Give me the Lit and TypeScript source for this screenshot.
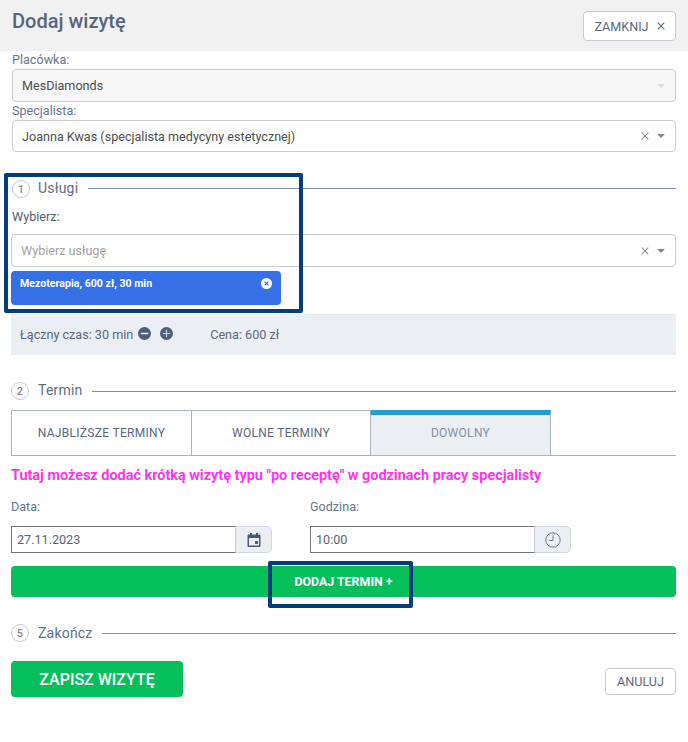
import { LitElement, html, css } from 'lit';
import { customElement } from 'lit/decorators.js';

const caret = html`<span class="caret"></span>`;
const cross = html`<svg class="cross" width="8" height="8" viewBox="0 0 8 8"><path d="M.7.7l6.6 6.6M7.3.7L.7 7.3" stroke="currentColor" stroke-width="1.1" fill="none"/></svg>`;

@customElement('app-root')
export class AppRoot extends LitElement {
    static styles = css`
        :host {
            display: block;
            position: relative;
            height: 742px;
            overflow: hidden;
            background: #fff;
            font-family: Roboto, "Liberation Sans", sans-serif;
            font-size: 12.6px;
            color: #5a6780;
        }

        .header {
            height: 51px;
            box-sizing: border-box;
            background: #f1f1f1;
            display: flex;
            justify-content: space-between;
            padding: 11px 12px 0;
        }

        h1 {
            margin: 0;
            font-size: 20px;
            line-height: 20px;
            font-weight: 500;
            color: #56657f;
        }

        .ghost {
            box-sizing: border-box;
            display: flex;
            align-items: center;
            justify-content: center;
            background: #fff;
            border: 1px solid #c5cbd8;
            border-radius: 4px;
            color: #5a6780;
        }

        .close {
            width: 93px;
            height: 30px;
            gap: 8px;
        }

        .content {
            padding: 0 12px 0 11px;
        }

        .field-label {
            height: 18px;
            line-height: 18px;
            padding-left: 1px;
            color: #66758f;
        }

        .select {
            box-sizing: border-box;
            display: flex;
            align-items: center;
            border: 1px solid #cccccc;
            border-radius: 4px;
            background: #fff;
            padding: 0 10px 0 9px;
            color: #4d4d4d;
        }

        .select .value {
            flex: 1;
        }

        .select .cross {
            color: #8c8c8c;
            margin-right: 8px;
        }

        .caret {
            width: 0;
            height: 0;
            border-left: 4px solid transparent;
            border-right: 4px solid transparent;
            border-top: 4px solid #888;
        }

        .placowka {
            height: 33px;
            margin-left: 1px;
            background: #f7f7f7;
        }

        .placowka .caret {
            border-top-color: #ddd;
        }

        .specjalista {
            height: 32px;
            margin-left: 1px;
        }

        .section {
            display: flex;
            align-items: center;
            height: 18px;
            font-size: 14px;
            letter-spacing: 0.2px;
            color: #5f6e88;
        }

        .section i {
            box-sizing: border-box;
            width: 18px;
            height: 18px;
            margin-right: 9px;
            border: 1px solid #c3cbd8;
            border-radius: 50%;
            display: flex;
            align-items: center;
            justify-content: center;
            font-style: normal;
            font-size: 11px;
            font-weight: 500;
            color: #7a879d;
            letter-spacing: 0;
        }

        .section span {
            margin-right: 9px;
        }

        .section b {
            flex: 1;
            height: 1px;
            background: #7d8ea8;
        }

        .uslugi {
            margin: 28px 0 0 1px;
        }

        .uslugi i {
            margin-right: 8px;
        }

        .uslugi span {
            margin-right: 10px;
            padding-bottom: 2px;
        }

        .uslugi b {
            margin-bottom: 1px;
        }

        .wybierz {
            margin-top: 10px;
            color: #4f5d75;
        }

        .service {
            height: 33px;
            margin-top: 8px;
            color: #a3a3a3;
        }

        .tag {
            box-sizing: border-box;
            width: 270px;
            height: 34px;
            margin-top: 4px;
            padding: 6px 9px 0;
            display: flex;
            justify-content: space-between;
            border-radius: 4px;
            background: #3570e6;
            color: #fff;
            font-size: 10.6px;
            font-weight: 700;
            line-height: 13px;
        }

        .tag svg {
            margin-top: 1px;
        }

        .summary {
            height: 41px;
            margin-top: 9px;
            padding-left: 9px;
            display: flex;
            align-items: center;
            background: #ebeef3;
            color: #5a6780;
        }

        .summary .time {
            margin-right: 5px;
        }

        .summary svg {
            margin: -3px 9px 0 0;
        }

        .summary .price {
            margin-left: 28px;
        }

        .termin {
            margin-top: 27px;
        }

        .termin span {
            margin-right: 10px;
            padding-bottom: 2px;
        }

        .tabs {
            display: flex;
            height: 46px;
            margin-top: 10px;
            border-bottom: 1px solid #a7b4c6;
            box-sizing: border-box;
        }

        .tab {
            box-sizing: border-box;
            width: 180px;
            display: flex;
            align-items: center;
            justify-content: center;
            border: 1px solid #a7b4c6;
            border-left: 0;
            border-bottom: 0;
            font-size: 12px;
            letter-spacing: 0.3px;
            color: #5a6780;
        }

        .tab:first-child {
            width: 181px;
            border-left: 1px solid #a7b4c6;
        }

        .tab:nth-child(2) {
            width: 179px;
        }

        .tab.active {
            background: #ebeef3;
            border-top: 5px solid #1d9fda;
            color: #8391a7;
            padding-bottom: 4px;
        }

        .notice {
            height: 17px;
            margin-top: 11px;
            line-height: 17px;
            font-size: 14.43px;
            font-weight: 700;
            color: #ff33ee;
        }

        .datetime {
            display: flex;
            margin-top: 14px;
        }

        .datetime > div:first-child {
            width: 299px;
        }

        .datetime label {
            display: block;
            height: 18px;
            line-height: 18px;
            color: #66758f;
        }

        .group {
            display: flex;
            height: 27px;
            margin-top: 10px;
        }

        .input {
            box-sizing: border-box;
            width: 225px;
            padding-left: 5px;
            display: flex;
            align-items: center;
            border: 1px solid #767676;
            border-right-color: #c5cbd8;
            color: #56657f;
        }

        .addon {
            box-sizing: border-box;
            width: 36px;
            display: flex;
            align-items: center;
            justify-content: center;
            background: #ebeef3;
            border: 1px solid #d2d8e2;
            border-left: 0;
            border-radius: 0 5px 5px 0;
        }

        .add {
            height: 31px;
            margin-top: 13px;
            display: flex;
            align-items: center;
            justify-content: center;
            background: #05bf5b;
            border-radius: 4px;
            color: #fff;
            font-size: 12.4px;
            font-weight: 700;
            padding-bottom: 1px;
            box-sizing: border-box;
        }

        .zakoncz {
            margin-top: 27px;
        }

        .footer {
            display: flex;
            justify-content: space-between;
            align-items: flex-end;
            margin-top: 19px;
        }

        .save {
            width: 172px;
            height: 36px;
            display: flex;
            align-items: center;
            justify-content: center;
            background: #05bf5b;
            border-radius: 4px;
            color: #fff;
            font-size: 16px;
            font-weight: 500;
        }

        .cancel {
            width: 71px;
            height: 27px;
            margin-bottom: 2px;
        }

        .mark {
            position: absolute;
            box-sizing: border-box;
            border: 4px solid #003e80;
            border-radius: 2px;
            pointer-events: none;
        }

        .mark-services {
            left: 4px;
            top: 173px;
            width: 299px;
            height: 140px;
        }

        .mark-add {
            left: 268px;
            top: 561px;
            width: 145px;
            height: 47px;
        }
    `;

    section(num: string, title: string, cls: string) {
        return html`<div class="section ${cls}"><i>${num}</i><span>${title}</span><b></b></div>`;
    }

    render() {
        return html`
            <div class="header">
                <h1>Dodaj wizytę</h1>
                <div class="ghost close">ZAMKNIJ ${cross}</div>
            </div>
            <div class="content">
                <div class="field-label">Placówka:</div>
                <div class="select placowka"><span class="value">MesDiamonds</span>${caret}</div>
                <div class="field-label">Specjalista:</div>
                <div class="select specjalista">
                    <span class="value">Joanna Kwas (specjalista medycyny estetycznej)</span>${cross}${caret}
                </div>

                ${this.section('1', 'Usługi', 'uslugi')}
                <div class="field-label wybierz">Wybierz:</div>
                <div class="select service"><span class="value">Wybierz usługę</span>${cross}${caret}</div>
                <div class="tag">
                    <span>Mezoterapia, 600 zł, 30 min</span>
                    <svg width="11" height="11" viewBox="0 0 11 11">
                        <circle cx="5.5" cy="5.5" r="5.5" fill="#fff"/>
                        <path d="M3.6 3.6l3.8 3.8M7.4 3.6L3.6 7.4" stroke="#3570e6" stroke-width="1.2"/>
                    </svg>
                </div>
                <div class="summary">
                    <span class="time">Łączny czas: 30 min</span>
                    <svg width="13" height="13" viewBox="0 0 14 14">
                        <circle cx="7" cy="7" r="7" fill="#4f5e7a"/>
                        <path d="M3 7h8" stroke="#ebeef3" stroke-width="1.6"/>
                    </svg>
                    <svg width="13" height="13" viewBox="0 0 14 14">
                        <circle cx="7" cy="7" r="7" fill="#4f5e7a"/>
                        <path d="M3 7h8M7 3v8" stroke="#c9d0dc" stroke-width="1.3"/>
                    </svg>
                    <span class="price">Cena: 600 zł</span>
                </div>

                ${this.section('2', 'Termin', 'termin')}
                <div class="tabs">
                    <div class="tab">NAJBLIŻSZE TERMINY</div>
                    <div class="tab">WOLNE TERMINY</div>
                    <div class="tab active">DOWOLNY</div>
                </div>
                <div class="notice">Tutaj możesz dodać krótką wizytę typu "po receptę" w godzinach pracy specjalisty</div>
                <div class="datetime">
                    <div>
                        <label>Data:</label>
                        <div class="group">
                            <div class="input">27.11.2023</div>
                            <div class="addon">
                                <svg width="14" height="14" viewBox="0 0 14 14">
                                    <path fill="#4a5a75" fill-rule="evenodd" d="M3 0h2v1.5h4V0h2v1.5h1.2c.7 0 1.3.6 1.3 1.3v9.9c0 .7-.6 1.3-1.3 1.3H1.8c-.7 0-1.3-.6-1.3-1.3V2.8c0-.7.6-1.3 1.3-1.3H3zM2 5v7.5h10V5zm6 3h3v3H8z"/>
                                </svg>
                            </div>
                        </div>
                    </div>
                    <div>
                        <label>Godzina:</label>
                        <div class="group">
                            <div class="input">10:00</div>
                            <div class="addon">
                                <svg width="16" height="16" viewBox="0 0 16 16" fill="none" stroke="#5f6e88" stroke-width="0.9">
                                    <circle cx="8" cy="8" r="7.2"/>
                                    <path d="M8 3.5V8.5H4"/>
                                </svg>
                            </div>
                        </div>
                    </div>
                </div>
                <div class="add">DODAJ TERMIN +</div>

                ${this.section('5', 'Zakończ', 'zakoncz')}
                <div class="footer">
                    <div class="save">ZAPISZ WIZYTĘ</div>
                    <div class="ghost cancel">ANULUJ</div>
                </div>
            </div>
            <div class="mark mark-services"></div>
            <div class="mark mark-add"></div>
        `;
    }
}
